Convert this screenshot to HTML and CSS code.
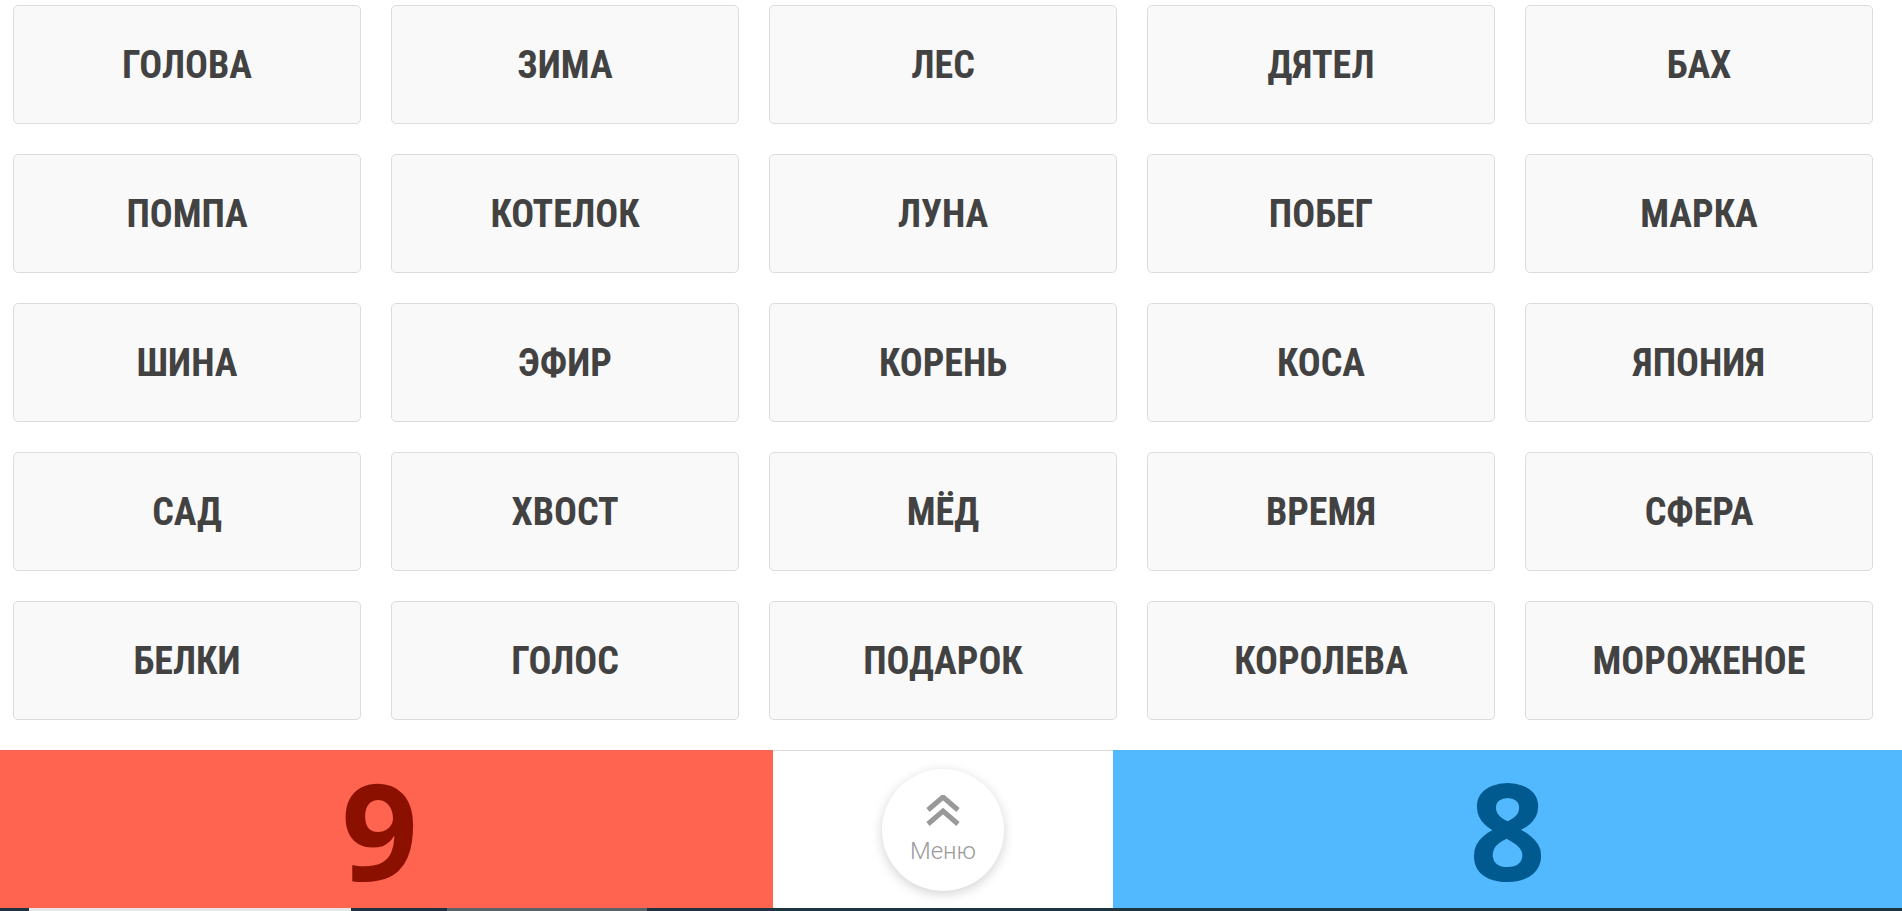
FILE: index.html
```html
<!DOCTYPE html>
<html lang="ru">
<head>
    <meta charset="UTF-8">
    <meta name="viewport" content="width=device-width, initial-scale=1.0">
    <title>Игра в слова</title>
    <link rel="stylesheet" href="styles.css">
</head>
<body>

    <!-- Word cards -->
    <main class="board">
        <div class="card">Голова</div>
        <div class="card">Зима</div>
        <div class="card">Лес</div>
        <div class="card">Дятел</div>
        <div class="card">Бах</div>
        <div class="card">Помпа</div>
        <div class="card">Котелок</div>
        <div class="card">Луна</div>
        <div class="card">Побег</div>
        <div class="card">Марка</div>
        <div class="card">Шина</div>
        <div class="card">Эфир</div>
        <div class="card">Корень</div>
        <div class="card">Коса</div>
        <div class="card">Япония</div>
        <div class="card">Сад</div>
        <div class="card">Хвост</div>
        <div class="card">Мёд</div>
        <div class="card">Время</div>
        <div class="card">Сфера</div>
        <div class="card">Белки</div>
        <div class="card">Голос</div>
        <div class="card">Подарок</div>
        <div class="card">Королева</div>
        <div class="card">Мороженое</div>
    </main>

    <!-- Score bar -->
    <footer class="score">
        <div class="score__team score__team--red">9</div>
        <div class="score__middle">
            <button class="menu-btn">
                <svg class="menu-btn__icon" viewBox="0 0 34 31" width="34" height="31">
                    <path d="M2 15 L17 2 L32 15" fill="none" stroke="#999" stroke-width="5"/>
                    <path d="M2 29 L17 16 L32 29" fill="none" stroke="#999" stroke-width="5"/>
                </svg>
                <span class="menu-btn__label">Меню</span>
            </button>
        </div>
        <div class="score__team score__team--blue">8</div>
    </footer>

    <div class="strip">
        <span class="strip__seg strip__seg--light"></span>
        <span class="strip__seg strip__seg--gray"></span>
    </div>

</body>
</html>
```

FILE: styles.css
```css
body {
    margin: 0;
    padding: 0;
    background-color: #fff;
    font-family: Roboto, 'Liberation Sans', sans-serif;
    height: 911px;
    overflow: hidden;
}

/* Word cards */
.board {
    display: grid;
    grid-template-columns: repeat(5, 1fr);
    grid-auto-rows: 119px;
    gap: 30px;
    padding: 5px 29px 0 13px;
}

.card {
    display: flex;
    align-items: center;
    justify-content: center;
    background-color: #f9f9f9;
    border: 1px solid #dcdcdc;
    border-radius: 5px;
    color: #424242;
    font-size: 38px;
    font-weight: 700;
    font-stretch: 75%;
    text-transform: uppercase;
}

/* Score bar */
.score {
    display: flex;
    height: 158px;
    margin-top: 30px;
}

.score__team {
    display: flex;
    align-items: center;
    justify-content: center;
    font-family: 'Open Sans', sans-serif;
    font-size: 134px;
    font-weight: 700;
    line-height: 1;
}

.score__team--red {
    width: 773px;
    box-sizing: border-box;
    padding-right: 14px;
    background-color: #ff6450;
    color: #8b1000;
}

.score__team--blue {
    flex: 1;
    background-color: #52b9fe;
    color: #005a8f;
}

.score__middle {
    width: 340px;
    display: flex;
    align-items: center;
    justify-content: center;
    border-top: 1px solid #dddddd;
    box-sizing: border-box;
}

.menu-btn {
    width: 122px;
    height: 122px;
    border: none;
    border-radius: 50%;
    background-color: #fff;
    box-shadow: 0 3px 12px rgba(0, 0, 0, 0.18);
    display: flex;
    flex-direction: column;
    align-items: center;
    justify-content: flex-start;
    padding: 26px 0 0;
    cursor: pointer;
}

.menu-btn__icon {
    display: block;
}

.menu-btn__label {
    margin-top: 13px;
    color: #9a9a9a;
    font-family: Roboto, sans-serif;
    font-size: 24px;
    font-weight: 300;
    line-height: 1;
}

.strip {
    display: flex;
    height: 3px;
    background-color: #1e3340;
    padding-left: 29px;
}

.strip__seg--light {
    width: 322px;
    background-color: #e6e6e6;
}

.strip__seg--gray {
    width: 200px;
    margin-left: 96px;
    background-color: #5a6468;
}
```
